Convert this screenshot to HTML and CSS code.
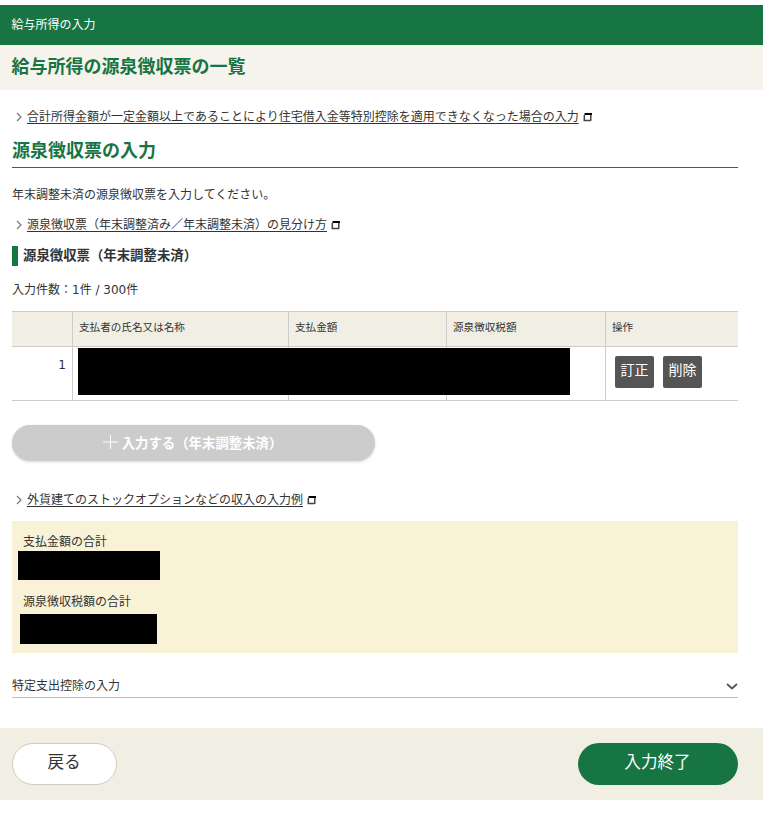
FILE: index.html
```html
<!DOCTYPE html>
<html lang="ja">
<head>
<meta charset="utf-8">
<title>給与所得の入力</title>
<link rel="stylesheet" href="styles.css">
</head>
<body>
<header class="bar">給与所得の入力</header>
<div class="page-title"><h1>給与所得の源泉徴収票の一覧</h1></div>
<main>
  <p class="link-row"><svg class="chev" viewBox="0 0 6 10"><path d="M1 1l4 4-4 4"/></svg><a>合計所得金額が一定金額以上であることにより住宅借入金等特別控除を適用できなくなった場合の入力</a><svg class="win" viewBox="0 0 9 9"><path class="side" d="M1.3 2v5.8M7.8 2v5.8M.5 7.5h7.3"/><path class="top" d="M1.5 1h7.5"/></svg></p>
  <h2>源泉徴収票の入力</h2>
  <p class="lead">年末調整未済の源泉徴収票を入力してください。</p>
  <p class="link-row"><svg class="chev" viewBox="0 0 6 10"><path d="M1 1l4 4-4 4"/></svg><a>源泉徴収票（年末調整済み／年末調整未済）の見分け方</a><svg class="win" viewBox="0 0 9 9"><path class="side" d="M1.3 2v5.8M7.8 2v5.8M.5 7.5h7.3"/><path class="top" d="M1.5 1h7.5"/></svg></p>
  <h3>源泉徴収票（年末調整未済）</h3>
  <p class="count">入力件数：1件 / 300件</p>
  <div class="table-wrap">
    <table>
      <colgroup><col class="c-no"><col class="c-name"><col class="c-pay"><col class="c-tax"><col class="c-op"></colgroup>
      <thead><tr><th></th><th>支払者の氏名又は名称</th><th>支払金額</th><th>源泉徴収税額</th><th>操作</th></tr></thead>
      <tbody><tr><td class="no">1</td><td></td><td></td><td></td><td><div class="ops"><button>訂正</button><button>削除</button></div></td></tr></tbody>
    </table>
    <div class="mask"></div>
  </div>
  <button class="add"><svg class="plus" viewBox="0 0 15 15"><path d="M7.5 0v14"/><path d="M0 7h15"/></svg>入力する（年末調整未済）</button>
  <p class="link-row example"><svg class="chev" viewBox="0 0 6 10"><path d="M1 1l4 4-4 4"/></svg><a>外貨建てのストックオプションなどの収入の入力例</a><svg class="win" viewBox="0 0 9 9"><path class="side" d="M1.3 2v5.8M7.8 2v5.8M.5 7.5h7.3"/><path class="top" d="M1.5 1h7.5"/></svg></p>
  <section class="totals">
    <p>支払金額の合計</p>
    <div class="total-pay"></div>
    <p>源泉徴収税額の合計</p>
    <div class="total-tax"></div>
  </section>
  <div class="accordion"><span>特定支出控除の入力</span><svg viewBox="0 0 12 7"><path d="M1 1l5 4.5L11 1"/></svg></div>
</main>
<footer><button class="back">戻る</button><button class="done">入力終了</button></footer>
</body>
</html>
```

FILE: styles.css
```css
* { box-sizing: border-box; }
body {
  margin: 0;
  padding-top: 5px;
  background: #fff;
  color: #333;
  font: 12px/20px "DejaVu Sans", "Noto Sans CJK JP", sans-serif;
}
h1, h2, h3, p { margin: 0; }
button { font-family: inherit; padding: 0; border: 0; }
svg { display: block; fill: none; flex: none; }
.bar { height: 40px; padding: 10px 12px 0 11.5px; background: #177544; color: #fff; }
.page-title { height: 45px; padding: 8px 12px 0 11.5px; background: #f6f3ec; }
h1, h2 { font-size: 18px; line-height: 28px; color: #177544; }
main { height: 638px; padding: 17px 25px 0 12px; }
.link-row { display: flex; align-items: center; height: 20px; padding-left: 4px; }
.link-row a { text-decoration: underline; text-underline-offset: 1.5px; }
.chev { width: 6px; height: 10px; margin-right: 5px; stroke: #777; stroke-width: 1.2; }
.win { width: 9px; height: 9px; margin-left: 4px; }
.win .top { stroke: #000; stroke-width: 2; }
.win .side { stroke: #444; stroke-width: 1.5; }
h2 { height: 31px; margin-top: 10px; border-bottom: 1px solid #177544; }
.lead { margin-top: 17px; }
.lead + .link-row { margin-top: 10px; }
h3 { height: 20px; margin-top: 11px; padding-left: 5px; border-left: 6px solid #177544; font-size: 13.4px; line-height: 20px; }
.count { margin-top: 14px; }
.table-wrap { position: relative; margin-top: 11px; }
table { width: 726px; table-layout: fixed; border-collapse: separate; border-spacing: 0; border-top: 1px solid #ccc; }
.c-no { width: 61px; }
.c-name { width: 216px; }
.c-pay { width: 158px; }
.c-tax { width: 159px; }
th, td { padding: 0 6px; border-right: 1px solid #ccc; border-bottom: 1px solid #ccc; vertical-align: top; text-align: left; font-weight: normal; }
th:last-child, td:last-child { border-right: 0; }
th { height: 35px; padding-top: 5px; background: #f1efe3; font-size: 10.6px; }
td { height: 54px; }
.no { padding-top: 8px; text-align: right; }
.ops { display: flex; gap: 9px; padding: 9px 0 0 3px; }
.ops button { width: 39px; height: 32px; padding-bottom: 6px; border-radius: 2px; background: #555; color: #fff; font-size: 14px; }
.mask { position: absolute; left: 66px; top: 37px; width: 492px; height: 47px; background: #000; }
.add { display: flex; align-items: center; justify-content: center; width: 363px; height: 36px; margin-top: 24px; padding: 0 2px 3px 0; border-radius: 18px; background: #ccc; box-shadow: 0 1px 3px rgba(0, 0, 0, .15); color: #fff; font-size: 13.4px; font-weight: bold; }
.plus { width: 15px; height: 15px; margin: 2px 4px 0 0; stroke: #fff; }
.example { margin-top: 29px; }
.totals { height: 132px; margin-top: 11px; padding: 11px 6px 0; background: #faf2d6; }
.totals p { padding-left: 5px; }
.total-pay { width: 142px; height: 29px; margin: -1px 0 12px; background: #000; }
.total-tax { width: 137px; height: 30px; margin: 2px 0 0 2px; background: #000; }
.accordion { display: flex; align-items: center; justify-content: space-between; height: 24px; margin-top: 21px; padding-top: 1px; border-bottom: 1px solid #c5bdb4; }
.accordion svg { width: 12px; height: 7px; margin-top: 1px; stroke: #555; stroke-width: 1.8; }
footer { display: flex; justify-content: space-between; height: 72px; padding: 15px 25px 0 12px; background: #f1efe3; }
footer button { height: 42px; padding: 0 1px 7px 0; border-radius: 21px; font-size: 16.6px; }
.back { width: 105px; border: 1px solid #d3cbc1; background: #fff; color: #333; }
.done { width: 160px; background: #177544; color: #fff; }
```
